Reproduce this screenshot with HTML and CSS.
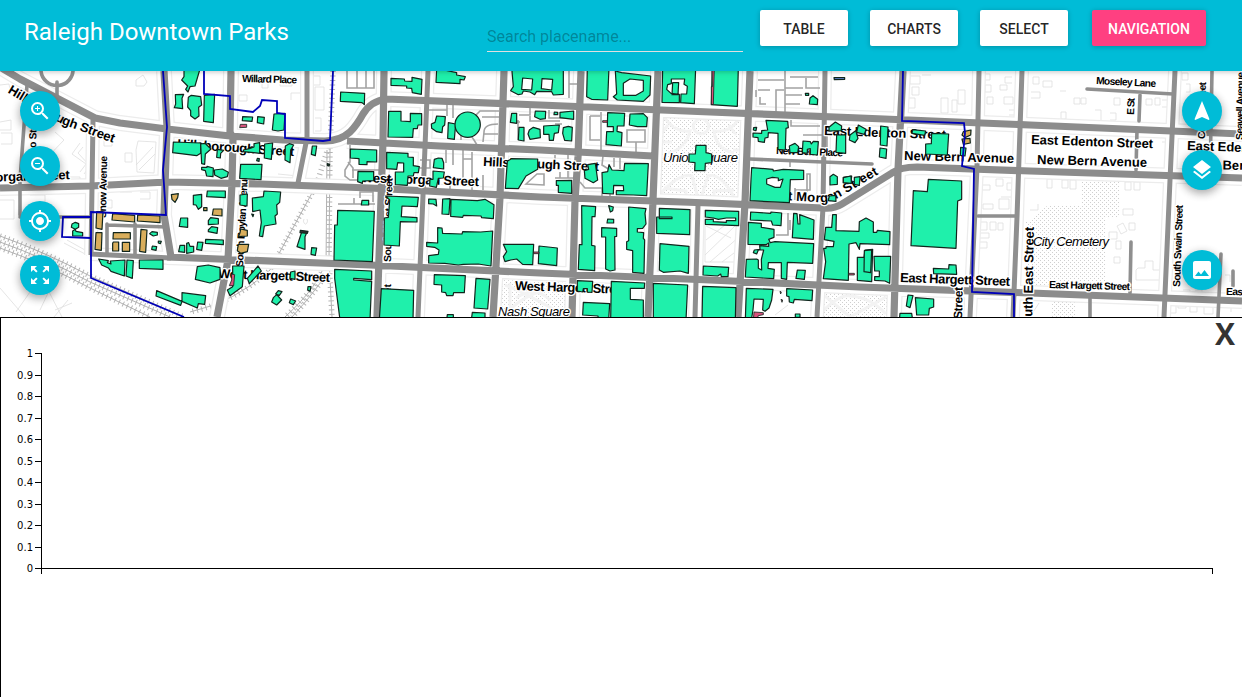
FILE: index.html
```html
<!DOCTYPE html>
<html lang="en">
<head>
<meta charset="utf-8">
<title>Raleigh Downtown Parks</title>
<link rel="stylesheet" href="styles.css">
</head>
<body>
<div class="app">
<header class="bar">
  <h1 class="title">Raleigh Downtown Parks</h1>
  <input class="search" type="text" placeholder="Search placename...">
  <nav class="actions">
    <button class="btn">TABLE</button>
    <button class="btn">CHARTS</button>
    <button class="btn">SELECT</button>
    <button class="btn btn-accent">NAVIGATION</button>
  </nav>
</header>

<main class="map">
<svg class="map-canvas" viewBox="0 71 1242 246" width="1242" height="246">
  <defs>
    <pattern id="dots" width="4" height="4" patternUnits="userSpaceOnUse"><path d="M0 0h1v1h-1zM2 2h1v1h-1z" fill="#cfcfcf"/></pattern>
    <path id="major" d="M0 67L20 79 95 118 120 123 167 129 230 136 283 140 325 141Q340 141 350 132Q357 125 363 114Q371 101 386 99L540 105 710 112 860 118 1030 125 1242 134M347 141L440 146 540 150 653 156M0 188L90 186 167 182 260 184 370 188 540 197 710 203 823 208Q834 209 842 204L892 173Q900 167 917 167L1030 171 1242 178M167 257L370 265 540 273 710 280 860 287 1030 293 1242 301
      M231 71L230 132 233 138 232 183 228 260 217 317M384 71L383 140 377 317M504 71L500 197 493 317M581 71L578 157 575 200 572 317M658 71L653 200 648 317M750 71L745 203 738 317M903 71L898 170 894 317M164 71L167 127 164 215 171 257"/>
    <path id="minor" d="M307 71V138L298 183M825 71L823 207 817 317M979 71L977 167 970 317M1022 71L1017 217 1013 317M1175 71L1170 180 1164 317M428 71L425 147 418 317M698 205L695 317M90 254L171 258M93 120L91 255"/>
    <path id="street" d="M27 85L20 180 20 215M20 217H92M107 224V254M135 224V254M107 225L167 227M41 71A16 16 0 0 0 73 68M57 82V98M750 159L872 164M1212 71L1210 178M1131 242L1130 293M1090 298V317M1221 254L1218 317M1233 271V286M1140 95L1139 121M1087 89L1173 94M1137 130L1136 170M978 216H1017"/>
  </defs>
  <rect x="0" y="71" width="1242" height="246" fill="#fff"/>

  <!-- parks -->
  <g fill="url(#dots)">
    <path d="M661 116L742 119 736 201 658 197zM502 280L569 283 567 317H500zM823 293L889 295 887 317H820zM1082 182H1120V217H1105V287H1032V218L1047 206H1082zM1052 300H1076V317H1052zM1026 222H1033V290H1026z"/>
  </g>
  <g class="walks">
    <path d="M664 117Q675 133 690 131Q686 149 668 153M738 120Q730 133 714 131Q716 149 734 153M660 194Q680 172 692 176L698 198M734 197Q720 172 708 176L701 198M660 142H672M733 150H740M693 125A8 9 0 1 0 709 125Q701 112 693 125M664 188L686 191V199M734 190L714 191V199M660 135L668 125M736 135L729 125"/>
    <path d="M503 317Q525 290 566 286M505 285Q530 295 566 317M516 298Q535 285 550 300M510 283V317M825 296L850 317 886 297M822 312Q840 294 850 296Q870 297 886 314"/>
  </g>

  <!-- outlines of unselected structures -->
  <g class="ghost">
    <path d="M136 80L143 75 147 82 144 86H136zM0 85L9 84 10 90M80 143L72 154 86 164 80 172M83 147L78 153 90 166 84 174M55 132L64 140 42 163M136 150L138 141 156 142 154 173 137 172zM136 165L153 147M139 170L155 154M125 153H132V162H125zM101 160H109V170H101zM104 138H112V146H104zM33 166V175H48M64 177H80V184H64zM0 200H14V219H0M100 200H112V208H100zM64 243L87 255M67 240L85 250M48 290L62 317M30 292L16 312M48 293L40 310M68 300L54 317M72 303L55 310M0 288L25 317M0 122L11 120V130H0M1 133H12V144H1M30 195H45V212H30M140 192H150V199H140M120 184V192H132"/>
    <path d="M239 95H247V101H239zM262 80H268V88H262zM280 77H292V86H280zM311 76H320V85H311zM315 87H324V110H315zM300 93H291V100M315 118H321V131H315M304 219a2 3 0 1 0 3 0M290 258H325M278 174L298 176 296 186M910 76H920V84H910zM912 87H919V95H912zM908 98H915V108H908zM941 98H948V113H941zM952 100H957V112H952zM922 75H931M958 90H965V104H958zM984 74H990V80H984zM985 85H991V92H985zM987 97H993V104H987zM1000 85H1007V90H1000zM1004 97H1013V104H1004zM1009 110H1015V115H1009M1012 77H1005V83H1012"/>
    <path d="M982 185H990V190H982zM996 179H1003V186H996zM1007 183H1014V190H1007zM983 204H993V209H983zM999 199H1009V209H999zM1001 197H1014V201M980 222H987V230H980zM990 222H996V230H990zM998 223H1003V230H998zM979 233H989V238H979zM979 242H987V248H979zM1033 77H1039V84H1033zM1043 81H1052V87H1043zM1061 112H1066V119H1061zM1074 98H1080V104H1074zM1081 98H1086V104H1081zM1114 98H1120V105H1114zM1146 99H1152V105H1146zM1155 98H1160V105H1155zM1162 100H1168V107H1162M1110 113H1116V120H1110M1095 110H1101V121H1095M1060 91H1066M1031 92H1040V98H1031M1182 73H1188V80H1182zM1186 84H1190V92H1186M1047 179H1052V188H1047zM1062 180H1068V188H1062zM1070 180H1076V189H1070zM1125 182H1131V190H1125zM1134 182H1140V190H1134zM1123 209H1133V215H1123zM1129 223H1135V230H1129zM1117 226L1123 223 1127 231 1121 234zM1109 232H1117V239H1109zM1116 241H1121V249H1116zM1114 257H1120V263H1114zM1138 268H1145V261H1153V270H1162V280H1136V270zM1038 204V210H1030M1170 303H1176V313H1170zM1178 303H1186V308H1178zM1190 305H1197V312H1190zM1204 305H1213V314H1204zM1225 305H1231V312M1183 290H1190V296H1183M1195 290H1202V296H1195M1183 130H1190V136H1183M1162 133H1167V142H1162M1039 303L1030 317M1148 300H1159V309M1225 275H1230V282"/>
    <path d="M706 226L731 238M706 240L725 225M705 255L736 225M710 262L739 237M722 262L738 250M705 225V262H738M775 315L788 305M711 125"/>
  </g>

  <!-- railways -->
  <g class="rail">
    <path d="M0 236Q45 252 90 276L184 317"/><path d="M0 242Q45 258 90 282L170 317"/><path d="M0 248Q45 264 90 288L150 317"/>
    <path d="M333 71L330 148 329 260 332 317"/><path d="M327 150L326 270"/><path d="M312 193L270 270Q235 302 190 312"/><path d="M326 260Q320 285 285 317"/><path d="M321 282Q308 300 292 317"/>
  </g>
  <g class="rail-ties">
    <path d="M0 236Q45 252 90 276L184 317"/><path d="M0 242Q45 258 90 282L170 317"/><path d="M0 248Q45 264 90 288L150 317"/>
    <path d="M333 71L330 148 329 260 332 317"/><path d="M312 193L270 270Q235 302 190 312"/><path d="M326 260Q320 285 285 317"/><path d="M321 282Q308 300 292 317"/><path d="M328 148L318 180"/>
  </g>

  <!-- roads -->
  <use href="#major" class="edge-major"/><use href="#minor" class="edge-minor"/>
  <use href="#major" class="gap-major"/><use href="#minor" class="gap-minor"/>
  <g class="alley">
    <path d="M347 71V88H374V71M357 71V88M366 71V88M338 204H375M354 204V198M360 198V192H373V202M350 145V162L345 170V176L350 180H357M348 162L353 168V178M352 170H384M429 110H447V103M453 104V118M447 110V116M461 140V136Q466 128 474 140L477 145M499 111H480L473 118M482 117H499M498 124Q484 124 484 132L483 142M484 134H498M420 160H430V168H420M446 150V163M453 150V165M463 150V185M472 152V190M463 159H472M483 175V190M450 175V190"/>
    <path d="M519 115H530V108M530 116V121H560M549 110V118H572M518 140V120M512 122H520M555 124H562M569 71V98M569 84H577M601 112V150M590 116V140H600M590 116H600M627 130H645V142H627zM636 142V152M526 184L537 174H544V185zM555 155V170M568 155V178M555 178H575M560 172V178M603 156L602 165 610 170M614 158V167M620 158V169M580 182L585 188H602V200M610 187V196"/>
    <path d="M758 80H784M758 90H770M785 71V112M760 97V104H766M776 112V90H784M756 90V97M790 77H818M806 78V88H820M785 88H803M785 95H802M785 104H800M791 120V126H820M803 135H823M795 200V188M795 190H810V174H807V192M788 213V235H776M790 220V230M790 162V167M827 127V150"/>
  </g>
  <use href="#street" class="street"/><use href="#minor" class="minor"/><use href="#major" class="major"/>

  <!-- street and place names -->
  <defs>
    <path id="hb" d="M7 92Q38 111 62 124L135 151"/>
    <path id="em" d="M764 199L816 202Q830 204 843 195L894 165"/>
  </defs>
  <use href="#names" class="halo"/>
  <g class="ink"><g id="names">
    <g class="lg">
      <text><textPath href="#hb" textLength="118">Hillsborough Street</textPath></text>
      <text><textPath href="#em" textLength="122">East Morgan Street</textPath></text>
      <text transform="translate(-15 182) rotate(-2)" textLength="85">Morgan Street</text>
      <text transform="translate(177 148) rotate(4)" textLength="117">Hillsborough Street</text>
      <text transform="translate(218 278) rotate(2)" textLength="112">West Hargett Street</text>
      <text transform="translate(361 182) rotate(2)" textLength="118">West Morgan Street</text>
      <text transform="translate(483 166) rotate(2.5)" textLength="116">Hillsborough Street</text>
      <text transform="translate(515 290) rotate(2)" textLength="112">West Hargett Street</text>
      <text transform="translate(824 135) rotate(2)" textLength="122">East Edenton Street</text>
      <text transform="translate(904 160) rotate(1.5)" textLength="110">New Bern Avenue</text>
      <text transform="translate(1031 144) rotate(2)" textLength="122">East Edenton Street</text>
      <text transform="translate(1037 164) rotate(1.5)" textLength="110">New Bern Avenue</text>
      <text transform="translate(1187 150) rotate(2)" textLength="122">East Edenton Street</text>
      <text transform="translate(1192 169) rotate(1)" textLength="110">New Bern Avenue</text>
      <text transform="translate(900 282) rotate(2)" textLength="110">East Hargett Street</text>
      <text transform="translate(1032 333) rotate(-89)" textLength="106">South East Street</text>
    </g>
    <g class="sm">
      <text transform="translate(242 82) rotate(1.5)" textLength="55">Willard Place</text>
      <text transform="translate(106 218) rotate(-89)" textLength="62">Snow Avenue</text>
      <text transform="translate(36 148) rotate(-88)" textLength="36">o Street</text>
      <text transform="translate(243 267) rotate(-87)" textLength="93">South Boylan Avenue</text>
      <text transform="translate(391 262) rotate(-89)" textLength="84">South West Street</text>
      <text transform="translate(390 350) rotate(-89)" textLength="66">South Street</text>
      <text transform="translate(776 154) rotate(2)" textLength="67">New Bern Place</text>
      <text transform="translate(1096 84) rotate(3)" textLength="60">Moseley Lane</text>
      <text transform="translate(1134 115) rotate(-88)" textLength="17">E St</text>
      <text transform="translate(1205 139) rotate(-89)" textLength="57">Cooke Street</text>
      <text transform="translate(1243 140) rotate(-89)" textLength="68">Seawell Avenue</text>
      <text transform="translate(1049 288) rotate(1.5)" textLength="81">East Hargett Street</text>
      <text transform="translate(1226 295) rotate(1)" textLength="81">East Hargett Street</text>
      <text transform="translate(1180 287) rotate(-88)" textLength="82">South Swain Street</text>
      <text class="mid" transform="translate(962 319) rotate(-89)" textLength="32">Street</text>
    </g>
    <g class="it">
      <text x="663" y="162" textLength="75">Union Square</text>
      <text x="1033" y="246" textLength="76">City Cemetery</text>
      <text x="498" y="316" textLength="72">Nash Square</text>
    </g>
  </g></g>

  <!-- buildings, one group per map tile -->
  <g class="b" transform="translate(0 70) scale(.33333)">
    <path d="M216 462L226 457 236 461V472L226 478 228 484 248 488V498H218V483L226 478 214 472zM296 567L325 572 322 578 333 582 331 573 375 570 373 618 333 604 325 594 305 585zM381 570L400 572 397 625 378 618zM418 570H489V598L418 595zM449 491L456 485 472 487V495L460 498zM457 528L470 530 468 541 455 538zM475 513L484 514 481 521 475 519z"/>
    <path class="tan" d="M290 425H309L306 478 288 474zM338 431L404 436V456L336 450zM413 435L480 438V458L412 453zM288 488H306L304 541 285 538zM340 488H391V507H339zM340 516H356V543H338V520zM367 517H389V544H367zM423 478L441 480 437 547 419 544z"/>
  </g>
  <g class="b" transform="translate(160 70) scale(.33333)">
    <path d="M72 -10H122L105 48 90 50 84 66 77 58 83 48 65 30 72 20zM46 74L71 73 66 85 68 116 43 113 47 102zM85 82L94 76 122 80 125 105 116 112 117 138 105 147 92 137V122L83 111zM133 76L164 73 160 158 131 154zM248 140L278 141 276 154 247 152zM293 140L313 142 311 162 292 158zM342 132L375 130 372 180 354 183 337 180zM40 216L122 219V250L110 257 38 248zM122 222L135 220 153 237 136 252 134 283 125 281zM172 238L191 241 182 250 181 264 170 262zM250 240L268 236 282 231V221L299 218V250L281 248 250 245zM314 222L338 219 334 268 313 264zM376 228L388 221 401 225 392 240 390 278 375 270zM457 228H470L466 257 454 253zM125 292H141V289L160 294 159 320 140 318 136 302 125 299zM163 300L187 297 205 307 202 320 183 325 164 315zM242 283H306L303 329 239 325zM142 363H196V383L140 380zM100 376L125 373V410L115 418 108 405 100 404zM240 375L262 372 261 408 240 405zM312 363L362 366 359 397 350 405 352 432 345 438 348 462 313 468 308 500 298 498 304 457 300 420 278 425 277 384 310 380zM62 444H83V472L58 469zM145 452L152 443 175 446V462L145 464zM145 480L155 470 173 473 171 490 145 485zM137 508L190 510V524L136 520zM60 526H74V547L56 545zM80 520L86 518 90 529H101V546L80 550zM113 516L129 517 125 541 110 538zM425 486H441L435 500V538L411 530zM455 533L470 534 466 556 453 553zM112 590L145 585 180 593V628L150 639 106 628zM218 588H252L247 650 210 677 202 660 218 650zM294 588L304 603 268 641 262 625zM392 606L405 603V628L390 625zM66 668L137 677 134 703 115 701 112 714 66 694zM-10 662L66 694 62 706 -12 678zM340 683L350 674 365 690 350 705 335 696zM355 662L366 665 358 676 347 672zM392 687L407 693 400 704 388 698zM444 650H453L450 664 443 660zM292 265L298 266 297 274 290 272zM275 432L281 434 279 440z"/>
    <path class="tan" d="M34 374L55 371 53 383 45 397 36 388zM131 413H141V422H131zM160 417H186V438L157 435zM242 477L262 481V498L235 500 240 488zM235 523L266 523 262 545 242 550 232 542z"/>
    <path class="red" d="M241 163H260V172L239 173zM214 612L224 614 221 647H208L215 630z"/>
    <path d="M421 481L444 484 442 490 420 488zM502 281L509 283 507 288 502 286z" fill="#333"/>
  </g>
  <g class="b" transform="translate(330 70) scale(.33333)">
    <path d="M32 66L104 70 103 104 96 98 31 94zM183 25L223 27 224 33 246 34V22L276 28 274 73 247 68 245 55 230 54V48L183 46zM320 -5L380 8V15L406 20 402 30 390 28V41L318 37zM176 124H213V153L241 155V130L275 131V165H264L262 176H250L248 202 174 201zM320 138L346 140 344 165 338 170 336 188 320 185 305 175 304 162 315 157zM355 158L377 162 373 208 353 205zM61 237L140 240V276L111 275V284L87 283V266L61 264zM170 247L234 250V261L250 262V287L268 290 265 308H252L250 318H234L232 346 196 344V306H221V279L203 278 200 298 170 296zM313 268L325 264 336 265 341 278V297L310 293zM84 304L131 305V332L98 333 97 340 83 335zM309 303L343 306 340 324 325 325 319 352 299 348 300 328 309 328zM96 391H116V405H94zM296 387L318 388 320 408 310 402 296 401zM338 387L360 386 357 433 336 432zM363 388L442 392 465 388 492 404 490 446 455 443 453 438 400 436 398 442 362 439zM167 378L265 382 262 410 216 408 214 440 261 443V456L211 455 208 528 162 525 163 444 175 442 179 390zM23 421L133 424 127 575 12 570 14 465H22zM323 473L336 474 338 490 396 492 398 485 452 486 488 483 483 588 445 582 400 583 385 585 344 580 296 579V557L325 553 327 540 314 532 290 529V517L323 519zM14 598L125 603V629L71 625V630L125 634 120 750H30L14 625zM154 656L251 661 249 750H148zM313 614L406 617 403 668H371L369 677H350L347 668 335 666V645L312 643zM438 625L480 628 473 717 432 714zM427 727L465 729V750H424zM352 734H370V750H350z"/>
    <circle cx="413" cy="164" r="38"/>
  </g>
  <g class="b" transform="translate(500 70) scale(.33333)">
    <path fill-rule="evenodd" d="M35 -8H190V73L160 75 155 65 110 64 104 74 90 66 70 63 66 72 55 74 32 62 40 50zM68 24L98 27 95 60 65 58zM126 26L158 28 155 60 124 56zM262 -8H327L323 90 275 88 260 80zM346 3L365 8 452 18 450 75 430 94 352 90 340 80 350 72zM390 27L430 31V63L408 76H370V40z"/>
    <path d="M488 -8H587L583 101 542 98 543 72H560L562 49 552 43 554 27H514V41L503 44 500 58 513 70 538 73V98L486 97zM518 38H536L534 74H516zM35 130H50V160L31 157zM106 123L137 124 136 146 120 148 104 140zM180 127L221 123V148L180 143zM163 126L173 127V134H162zM57 172H72V213L55 210zM88 180L100 172 120 178 121 203 90 208 84 192zM131 168L178 165 175 188 163 190 160 211H148L147 193H131zM190 173L205 169 217 172 215 213 194 211 188 190zM323 128L374 130 372 168H352L351 184 366 188 364 228 318 224 320 185H340V170H322zM390 132L430 131 442 143 440 170H412L388 165zM22 274L34 266 113 267V298L78 318 55 356 16 355zM169 332L215 331V370L175 367V346H169zM263 284L286 280 293 330 280 338 255 325 253 302 266 298zM374 280L445 281 440 377 400 375 349 374V362H371L370 347 341 346 340 372 308 370 306 308 323 305 327 284 336 300 372 302zM245 407L287 410 285 440H276L275 526 285 528 284 602 235 598 238 524H246zM326 407L340 411 338 422 331 426zM323 447L341 448V459H321zM305 473L350 475V499L344 500 345 600 330 603 317 597V501H305zM386 411L438 416 435 430 438 462 428 475 412 476V486L431 488 430 505 434 510 432 610 398 607V542L380 538V515L386 512zM478 415L570 419 569 494 470 490V441H516V446H478zM480 521L567 529 565 610 540 603 490 607 478 600zM10 523L101 523 98 584 68 583 50 567 32 570 15 575 10 560 20 545zM117 528L172 534 170 587 115 581zM232 632L278 634 276 667 262 666V656H250L248 666 232 663zM334 634L434 639 433 655H391V688L430 690V750H332zM250 697L329 701 326 750H295L294 738 248 735zM460 640L563 645 558 750H460z"/>
    <path class="red" d="M308 152H322V157H308zM101 546H117V551H101z"/>
  </g>
  <g class="b" transform="translate(650 70) scale(.33333)">
    <path d="M138 226H168V248L185 252V278L166 280 165 302H134L135 278 117 276V252H136zM187 -8H265L262 109 184 104zM348 151L413 154 415 173 408 175 406 240 384 238V190L355 188 354 202 345 204 343 217 325 214 324 203 309 201V189L335 190V182L353 180zM311 173L320 172 318 182 310 180zM480 84L489 77 503 88 502 104 478 102zM466 70H476V76H467zM418 228L435 220 446 230 443 248H420zM459 213L481 215 484 222 490 214 505 215 502 255 481 253V236L472 238V250L457 248zM560 195H587V250L558 247zM537 172L556 156 575 168 574 182 537 183zM540 320L550 313 562 320V343L540 345zM580 322L605 318 603 340 580 338zM538 378L557 376 558 394 535 392z"/>
    <path fill-rule="evenodd" d="M305 293L369 298 370 303 400 298 461 301V328L421 329 418 398 300 392 303 328zM350 327L367 322 385 324V332L399 327 391 352 375 352 350 342z"/>
    <path d="M302 426L362 430 363 426 395 429 393 467 368 465 364 453 301 450zM431 430L441 431 444 462H450L449 434 492 450 490 508 427 503zM295 457L334 460V472L372 478V502L356 508 361 518 375 515 491 521 488 580 412 577 410 628 394 625V578H355L354 595 373 598 371 626 286 621 289 568 320 567 325 570V595L335 600 334 568 341 540H325L320 552 310 548 313 540 330 538 329 527 356 529V519L348 524 294 523zM442 600L466 601 463 628 438 625zM166 421L266 424V467L166 463V448H190V455L229 457V452H257V444H229L205 448 190 444 166 441zM160 588L236 592 234 620H214L212 612 203 618 159 615zM158 649L258 653 256 750H156zM289 655L369 658 365 690 357 714 345 724 338 720 340 688 312 687 309 720 304 750H286zM410 656L488 660 486 692 433 688 430 699 418 696 417 680 410 678zM436 732H450V742H436z"/>
    <path class="red" d="M186 -8H193L190 104 184 103V50H187zM312 726L340 728V734L325 737 320 750H310zM390 664L394 666 392 672zM393 688L398 690 396 697z"/>
    <path d="M552 23H584V28L553 29z" fill="#6a8fe0"/>
  </g>
  <g class="b" transform="translate(820 70) scale(.33333)">
    <path d="M90 195L107 182 114 205 105 218 88 210zM115 165L138 178 133 193 110 187zM182 168L204 171 201 228 181 225zM180 234L200 237 198 265 178 261zM278 179L317 183 314 196 276 190zM335 190L386 192 382 255 317 252V222L334 221zM422 232L438 234 435 258 421 256zM70 323L93 318 94 340 70 338zM103 322L120 320 118 346 103 343zM325 328L425 333V388L413 393 408 535 273 527 280 362 322 365zM38 434H49L48 482 117 484 118 455 138 444 160 456V487H170L172 481 210 485 209 524 120 521 118 538 108 518 87 522 85 631 10 626 17 575 11 535H18V530H40L42 514 13 509 17 472H35zM112 562H132L135 540 158 538 155 635 112 631zM162 559H212L209 640 195 633 164 631V620H178V603H164zM340 595L386 597 387 584 408 585 410 613 341 611zM264 675L279 677 270 713 259 708zM286 683L341 687V711L328 715 326 735H290zM240 730H275L278 750H238z"/>
    <path d="M133 542L155 540 152 608 132 605z"/>
    <path class="tan" d="M430 185L453 180 452 195 435 203 426 195zM426 207L450 205 451 219 430 223z"/>
    <path class="red" d="M86 610H103V615H86z"/>
  </g>

  <!-- district boundary -->
  <path class="boundary" d="M163 71L167 127 163 170 166 215 91 212V278L184 317M91 217L63 217 62 237 91 238M204 71L204 94 230 96 230 109 253 112 260 106 262 100 277 101V113L285 114V138L323 141 330 140 333 71M903 71L902 121 964 123 965 133 962 166 974 169 972 292 1014 294V317"/>
</svg>

<div class="tools tools-left">
  <button class="fab" aria-label="Zoom in"><svg viewBox="0 0 24 24"><path d="M15.5 14h-.79l-.28-.27A6.471 6.471 0 0 0 16 9.5 6.5 6.5 0 1 0 9.5 16c1.61 0 3.09-.59 4.23-1.57l.27.28v.79l5 4.99L20.49 19l-4.99-5zm-6 0C7.01 14 5 11.99 5 9.5S7.01 5 9.5 5 14 7.01 14 9.5 11.99 14 9.5 14zm2.5-4h-2v2H9v-2H7V9h2V7h1v2h2v1z"/></svg></button>
  <button class="fab" aria-label="Zoom out"><svg viewBox="0 0 24 24"><path d="M15.5 14h-.79l-.28-.27A6.471 6.471 0 0 0 16 9.5 6.5 6.5 0 1 0 9.5 16c1.61 0 3.09-.59 4.23-1.57l.27.28v.79l5 4.99L20.49 19l-4.99-5zm-6 0C7.01 14 5 11.99 5 9.5S7.01 5 9.5 5 14 7.01 14 9.5 11.99 14 9.5 14zM7 9h5v1H7z"/></svg></button>
  <button class="fab" aria-label="My location"><svg viewBox="0 0 24 24"><path d="M12 8c-2.21 0-4 1.79-4 4s1.79 4 4 4 4-1.79 4-4-1.79-4-4-4zm8.94 3A8.994 8.994 0 0 0 13 3.06V1h-2v2.06A8.994 8.994 0 0 0 3.06 11H1v2h2.06A8.994 8.994 0 0 0 11 20.94V23h2v-2.06A8.994 8.994 0 0 0 20.94 13H23v-2h-2.06zM12 19c-3.87 0-7-3.13-7-7s3.13-7 7-7 7 3.13 7 7-3.13 7-7 7z"/></svg></button>
  <button class="fab fab-extent" aria-label="Full extent"><svg viewBox="0 0 24 24"><path d="M15 3l2.3 2.3-2.89 2.87 1.42 1.42L18.7 6.7 21 9V3zM3 9l2.3-2.3 2.87 2.89 1.42-1.42L6.7 5.3 9 3H3zm6 12l-2.3-2.3 2.89-2.87-1.42-1.42L5.3 17.3 3 15v6zm12-6l-2.3 2.3-2.87-2.89-1.42 1.42 2.89 2.87L15 21h6z"/></svg></button>
</div>
<div class="tools tools-right">
  <button class="fab" aria-label="Rotate north"><svg viewBox="0 0 24 24"><path d="M12 2L4.5 20.29l.71.71L12 18l6.79 3 .71-.71z"/></svg></button>
  <button class="fab fab-layers" aria-label="Layers"><svg viewBox="0 0 24 24"><path d="M11.99 18.54l-7.37-5.73L3 14.07l9 7 9-7-1.63-1.27-7.38 5.74zM12 16l7.36-5.73L21 9l-9-7-9 7 1.63 1.27L12 16z"/></svg></button>
  <button class="fab fab-image" aria-label="Export image"><svg viewBox="0 0 24 24"><path d="M21 19V5c0-1.1-.9-2-2-2H5c-1.1 0-2 .9-2 2v14c0 1.1.9 2 2 2h14c1.1 0 2-.9 2-2zM8.5 13.5l2.5 3.01L14.5 12l4.5 6H5l3.5-4.5z"/></svg></button>
</div>
</main>

<section class="chart-panel">
  <svg class="chart" width="1200" height="270" viewBox="1 318 1200 270">
    <path class="axis" d="M35 353.5H41.5V568.5H35M35 375.5h6M35 396.5h6M35 418.5h6M35 439.5h6M35 461.5h6M35 482.5h6M35 504.5h6M35 525.5h6M35 547.5h6M41.5 574V568.5H1212.5V574"/>
    <g class="ticks">
      <text x="33" y="357">1</text><text x="33" y="379">0.9</text><text x="33" y="400">0.8</text><text x="33" y="422">0.7</text><text x="33" y="443">0.6</text><text x="33" y="465">0.5</text><text x="33" y="486">0.4</text><text x="33" y="508">0.3</text><text x="33" y="529">0.2</text><text x="33" y="551">0.1</text><text x="33" y="572">0</text>
    </g>
  </svg>
  <button class="close">X</button>
</section>
</div>
</body>
</html>
```
FILE: styles.css
```css
* { box-sizing: border-box; }
body { margin: 0; font-family: Roboto, sans-serif; background: #fff; overflow: hidden; }
button { border: 0; padding: 0; font-family: inherit; }
.app { display: flex; flex-direction: column; height: 697px; width: 1242px; }

.bar {
  position: relative; z-index: 2; flex: none; height: 71px;
  display: flex; align-items: flex-start; padding: 0 36px 0 24px;
  background: #00bcd7;
  box-shadow: 0 1px 6px rgba(0,0,0,.12), 0 1px 4px rgba(0,0,0,.12);
}
.title { margin: 0; width: 463px; font-size: 24px; font-weight: 400; line-height: 64px; color: #fff; }
.search {
  width: 256px; height: 32px; margin-top: 20px; padding: 2px 0 0;
  border: 0; border-bottom: 1px solid #e0e0e0; background: none;
  font: 16px Roboto, sans-serif; color: #fff; outline: 0;
}
.search::placeholder { color: rgba(0,0,0,.3); opacity: 1; }
.actions { display: flex; gap: 22px; margin: 10px 0 0 auto; }
.btn {
  width: 88px; height: 36px; padding-top: 2px; border-radius: 2px;
  background: #fff; color: rgba(0,0,0,.87);
  font-size: 14px; font-weight: 500; line-height: 34px;
  box-shadow: 0 1px 6px rgba(0,0,0,.12), 0 1px 4px rgba(0,0,0,.12);
}
.btn-accent { width: 114px; margin-left: 2px; background: #ff4081; color: #fff; }

.map { position: relative; flex: none; height: 246px; overflow: hidden; }
.map-canvas { display: block; font-family: "Liberation Sans", Arial, sans-serif; }
.map-canvas use { fill: none; stroke-linejoin: round; }
.edge-major { stroke: #ececec; stroke-width: 16; }
.edge-minor { stroke: #ececec; stroke-width: 14; }
.gap-major { stroke: #fff; stroke-width: 13.5; }
.gap-minor { stroke: #fff; stroke-width: 11.5; }
.major { stroke: #8c8c8c; stroke-width: 7.2; }
.minor { stroke: #8f8f8f; stroke-width: 5; }
.street { stroke: #8f8f8f; stroke-width: 3.6; stroke-linecap: round; }
.alley { fill: none; stroke: #a3a3a3; stroke-width: 1.6; }
.walks { fill: none; stroke: #f3f3f3; stroke-width: 3; }
.ghost { fill: none; stroke: #dedede; stroke-width: .8; }
.rail { fill: none; stroke: #a8a8a8; stroke-width: .9; }
.rail-ties { fill: none; stroke: #b4b4b4; stroke-width: 5.5; stroke-dasharray: 1 3.5; }
.halo { stroke: #fff; stroke-width: 2.6px; }
.ink { fill: #000; stroke: none; }
.lg { font-size: 13px; font-weight: 700; }
.sm { font-size: 10.3px; font-weight: 700; }
.sm .mid { font-size: 12px; }
.it { font-size: 13px; font-style: italic; }
.b { fill: #1ff0ab; stroke: #10251c; stroke-width: 3.6; stroke-linejoin: round; }
.tan { fill: #d9ae5c; }
.red { fill: #d8527c; stroke-width: 2.4; }
.boundary { fill: none; stroke: #0000b8; stroke-width: 1.8; }

.tools { position: absolute; top: 20px; display: flex; flex-direction: column; }
.tools-left { left: 20px; gap: 15px; }
.tools-right { right: 20px; }
.fab {
  width: 40px; height: 40px; border-radius: 50%; background: #00bcd7;
  display: flex; align-items: center; justify-content: center;
  box-shadow: 0 3px 10px rgba(0,0,0,.16), 0 3px 10px rgba(0,0,0,.23);
}
.fab svg { width: 24px; height: 24px; fill: #fff; }
.fab-extent { margin-top: -1px; }
.fab-layers { margin-top: 19px; }
.fab-image { margin-top: 60px; }

.chart-panel {
  flex: 1; display: flex; justify-content: space-between; align-items: flex-start;
  border: 1px solid #000; border-width: 1px 0 0 1px; background: #fff;
}
.chart { flex: none; overflow: visible; }
.axis { fill: none; stroke: #000; shape-rendering: crispEdges; }
.ticks { font: 10px "DejaVu Sans", sans-serif; text-anchor: end; fill: #000; }
.close {
  margin-right: 7px; background: none; color: #333;
  font: 700 30px/32px "Open Sans", sans-serif;
}
```
